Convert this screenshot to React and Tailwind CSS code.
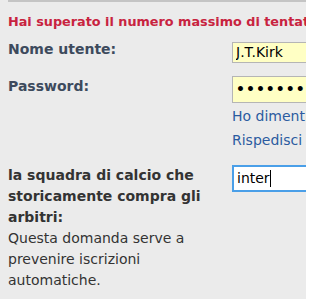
import React from "react";

export default function App() {
  return (
    <div className="w-[306px] h-[299px] overflow-hidden bg-[#ebebeb] font-['DejaVu_Sans',sans-serif] text-[14px]">
      <div className="ml-2 border-t-2 border-[#c4c4c4] pt-[10px]">
        <p className="font-bold text-[12.8px] text-[#c8233f] whitespace-nowrap leading-[20px]">
          Hai superato il numero massimo di tentativi
        </p>

        <div className="grid grid-cols-[224px_1fr] mt-[6px]">
          {/* username */}
          <label className="font-bold text-[#3d4a5d] leading-[21px] mt-[1px]">
            Nome utente:
          </label>
          <div className="mt-[4px]">
            <input
              readOnly
              value="J.T.Kirk"
              className="block w-[120px] h-[21px] px-[3px] bg-[#ffffc4] border border-[#b5b5b5] text-[14px] text-black outline-none"
            />
          </div>

          {/* password */}
          <label className="font-bold text-[#3d4a5d] leading-[21px] mt-[13px]">
            Password:
          </label>
          <div className="mt-[13px]">
            <div className="w-[120px] h-[27px] px-[3px] bg-[#ffffc4] border border-[#b5b5b5] flex items-center text-black text-[14px] font-bold tracking-[1px] whitespace-nowrap overflow-hidden">
              ••••••••••••
            </div>
            <div className="text-[#2b5ba0] leading-[24px] mt-[1px] whitespace-nowrap">
              <div>Ho dimenticato la password</div>
              <div>Rispedisci la conferma</div>
            </div>
          </div>

          {/* question */}
          <div className="mt-[13px] text-[#333] leading-[21px] pr-2">
            <div className="font-bold">
              la squadra di calcio che storicamente compra gli arbitri:
            </div>
            <div>Questa domanda serve a prevenire iscrizioni automatiche.</div>
          </div>
          <div className="mt-[13px]">
            <div className="w-[120px] h-[27px] px-[3px] bg-white border-2 border-[#4a9fe8] flex items-center text-black text-[14px]">
              inter<span className="w-px h-[17px] bg-black" />
            </div>
          </div>
        </div>
      </div>
    </div>
  );
}
